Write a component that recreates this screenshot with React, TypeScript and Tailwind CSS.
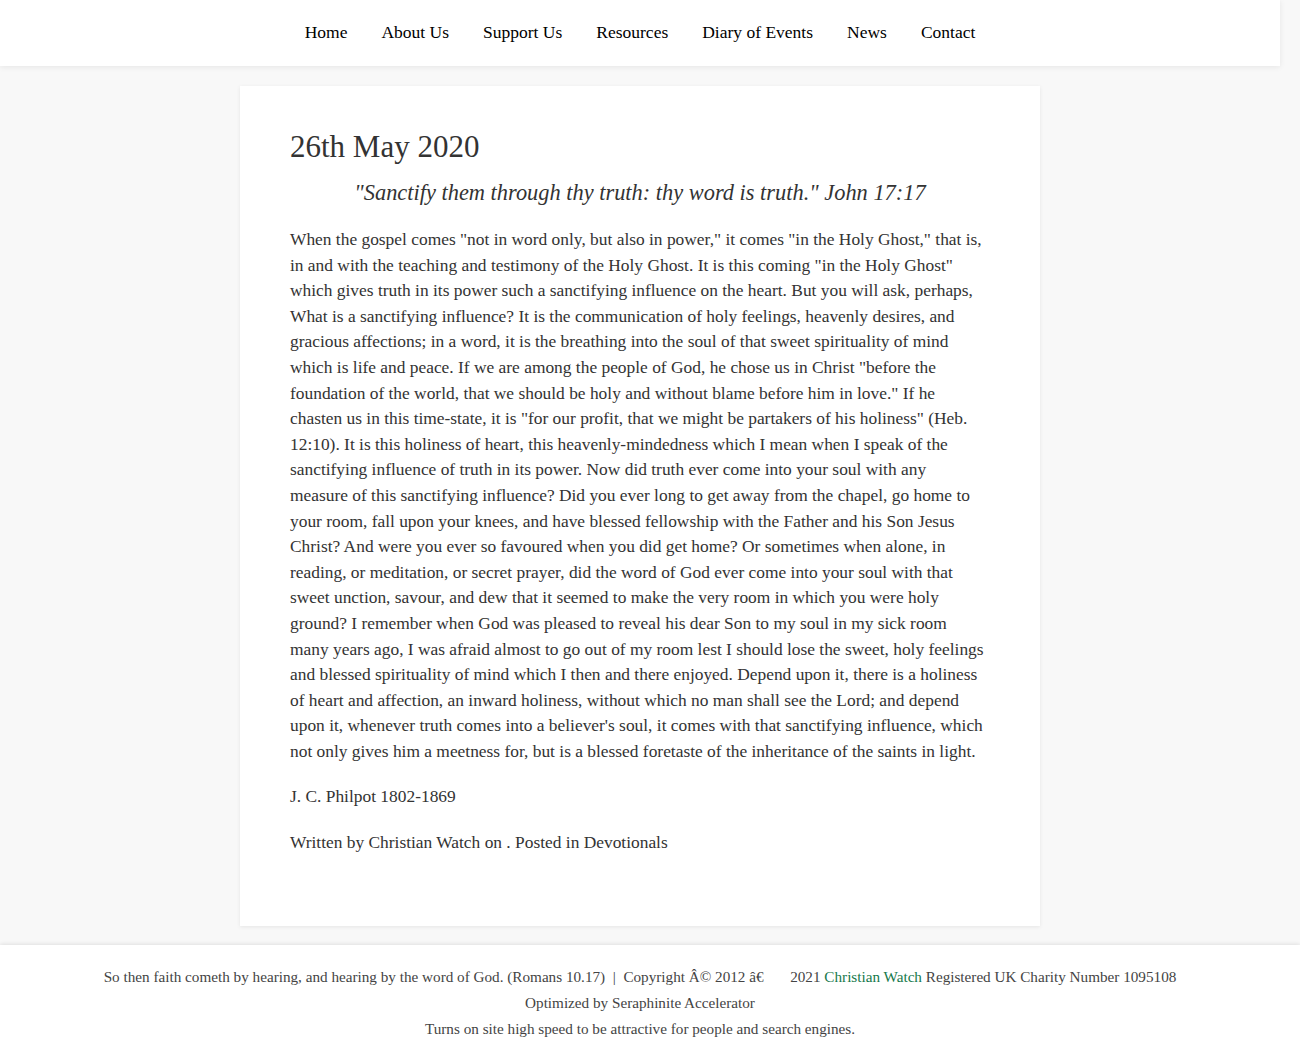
import React from 'react';

const navItems = ['Home', 'About Us', 'Support Us', 'Resources', 'Diary of Events', 'News', 'Contact'];

const bodyLines = [
  'When the gospel comes "not in word only, but also in power," it comes "in the Holy Ghost," that is,',
  'in and with the teaching and testimony of the Holy Ghost. It is this coming "in the Holy Ghost"',
  'which gives truth in its power such a sanctifying influence on the heart. But you will ask, perhaps,',
  'What is a sanctifying influence? It is the communication of holy feelings, heavenly desires, and',
  'gracious affections; in a word, it is the breathing into the soul of that sweet spirituality of mind',
  'which is life and peace. If we are among the people of God, he chose us in Christ "before the',
  'foundation of the world, that we should be holy and without blame before him in love." If he',
  'chasten us in this time-state, it is "for our profit, that we might be partakers of his holiness" (Heb.',
  '12:10). It is this holiness of heart, this heavenly-mindedness which I mean when I speak of the',
  'sanctifying influence of truth in its power. Now did truth ever come into your soul with any',
  'measure of this sanctifying influence? Did you ever long to get away from the chapel, go home to',
  'your room, fall upon your knees, and have blessed fellowship with the Father and his Son Jesus',
  'Christ? And were you ever so favoured when you did get home? Or sometimes when alone, in',
  'reading, or meditation, or secret prayer, did the word of God ever come into your soul with that',
  'sweet unction, savour, and dew that it seemed to make the very room in which you were holy',
  'ground? I remember when God was pleased to reveal his dear Son to my soul in my sick room',
  'many years ago, I was afraid almost to go out of my room lest I should lose the sweet, holy feelings',
  'and blessed spirituality of mind which I then and there enjoyed. Depend upon it, there is a holiness',
  'of heart and affection, an inward holiness, without which no man shall see the Lord; and depend',
  "upon it, whenever truth comes into a believer's soul, it comes with that sanctifying influence, which",
  'not only gives him a meetness for, but is a blessed foretaste of the inheritance of the saints in light.',
];

const App: React.FC = () => {
  return (
    <div className="h-[1062px] overflow-hidden bg-[#f8f8f8] font-['Liberation_Serif',serif] text-[#333]">
      <header className="relative z-10 flex h-[66px] w-[1280px] items-center justify-center gap-[34px] bg-white pb-[2px] shadow-[0_1px_6px_rgba(0,0,0,0.08)]">
        {navItems.map((item) => (
          <a key={item} href="#" className="text-[17.5px] text-black">
            {item}
          </a>
        ))}
      </header>

      <main className="w-[1280px] pt-5 pb-[19px]">
        <article className="mx-auto w-[800px] bg-white px-[50px] pt-[42px] pb-[70px] shadow-[0_1px_4px_rgba(0,0,0,0.08)]">
          <h1 className="text-[31px] leading-[38px] text-[#333]">26th May 2020</h1>
          <p className="mt-[13px] text-center text-[22.4px] italic leading-[28px]">
            "Sanctify them through thy truth: thy word is truth." John 17:17
          </p>
          <p className="mt-[20px] text-[17.4px] leading-[25.6px]">
            {bodyLines.map((line, i) => (
              <span key={i} className="block whitespace-nowrap">
                {line}
              </span>
            ))}
          </p>
          <p className="mt-[20px] text-[17.4px] leading-[25.6px]">J. C. Philpot 1802-1869</p>
          <p className="mt-[20px] text-[17.4px] leading-[25.6px]">
            Written by Christian Watch on . Posted in Devotionals
          </p>
        </article>
      </main>

      <footer className="bg-white shadow-[0_-1px_4px_rgba(0,0,0,0.1)]">
        <div className="w-[1280px] pt-[19px] pb-5 text-center text-[15.2px] leading-[26px] text-[#444]">
          <p>
            So then faith cometh by hearing, and hearing by the word of God. (Romans 10.17)&nbsp; | &nbsp;Copyright Â© 2012 â€&nbsp;&nbsp;&nbsp;&nbsp;&nbsp;&nbsp; 2021{' '}
            <a href="#" className="text-[#16794b]">Christian Watch</a> Registered UK Charity Number 1095108
          </p>
          <p>Optimized by Seraphinite Accelerator</p>
          <p>Turns on site high speed to be attractive for people and search engines.</p>
        </div>
      </footer>
    </div>
  );
};

export default App;
